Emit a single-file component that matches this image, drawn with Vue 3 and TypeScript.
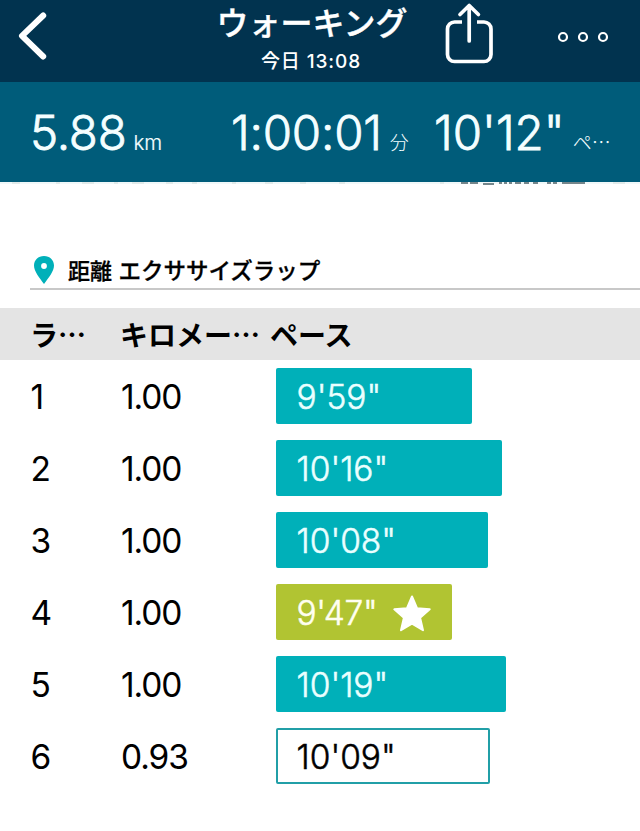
<script setup lang="ts">
interface Lap {
  id: number
  km: string
  pace: string
  width: number
  kind: 'full' | 'best' | 'partial'
}

const laps: Lap[] = [
  { id: 1, km: '1.00', pace: '9\'59"', width: 196, kind: 'full' },
  { id: 2, km: '1.00', pace: '10\'16"', width: 226, kind: 'full' },
  { id: 3, km: '1.00', pace: '10\'08"', width: 212, kind: 'full' },
  { id: 4, km: '1.00', pace: '9\'47"', width: 176, kind: 'best' },
  { id: 5, km: '1.00', pace: '10\'19"', width: 230, kind: 'full' },
  { id: 6, km: '0.93', pace: '10\'09"', width: 214, kind: 'partial' },
]
</script>

<template>
  <main class="screen">
    <header class="topbar">
      <svg class="back" viewBox="0 0 60 82" aria-hidden="true">
        <path d="M43.2 15.500 22 35.800l21.200 20.700" />
      </svg>
      <div class="heading">
        <h1>ウォーキング</h1>
        <p>今日 13:08</p>
      </div>
      <svg class="share" viewBox="0 0 60 82" aria-hidden="true">
        <path d="M22 22h-7.500a7 7 0 0 0-7 7v25.500a7 7 0 0 0 7 7h29.500a7 7 0 0 0 7-7V29a7 7 0 0 0-7-7H37" />
        <path d="M29.200 41V6M20 14.500l9.200-9 9.200 9" stroke-linecap="round" />
      </svg>
      <svg class="more" viewBox="0 0 60 82" aria-hidden="true">
        <circle cx="8" cy="37" r="4" />
        <circle cx="28" cy="37" r="4" />
        <circle cx="48" cy="37" r="4" />
      </svg>
    </header>

    <section class="summary">
      <div class="stat distance"><span class="value">5.88</span><span class="unit">km</span></div>
      <div class="stat duration"><span class="value">1:00:01</span><span class="unit jp">分</span></div>
      <div class="stat pace"><span class="value">10'12"</span><span class="unit jp">ペ…</span></div>
    </section>
    <svg class="map-edge" viewBox="0 0 640 3" aria-hidden="true">
      <path class="faint" d="M0 1h640" />
      <path class="road" d="M12 1h8M56 1h4M82 1h12M114 1h4M132 1h12M166 1h7M192 1h5M232 1h4M265 1h8M300 1h6M339 1h6M440 1h4M613 1h12" />
      <path class="label" d="M461 1h7M470 1h8M483 2h11M499 1h3M504 1h3M509 1h3M515 1h6M524 1h5M533 1h5M547 1h4M553 1h4M562 1h23" />
    </svg>

    <section class="laps">
      <h2 class="title">
        <svg class="pin" viewBox="0 0 20 28" aria-hidden="true">
          <path fill-rule="evenodd" d="M10 0C4.200 0 0 4.200 0 9.600 0 15.500 5.500 22 10 28c4.500-6 10-12.500 10-18.400C20 4.200 15.800 0 10 0Zm0 7.100a2.900 2.900 0 1 1 0 5.800 2.900 2.900 0 0 1 0-5.800Z" />
        </svg>
        <span class="subject">距離</span>
        <span class="name">エクササイズラップ</span>
      </h2>
      <div class="columns head">
        <span>ラ…</span><span>キロメー…</span><span class="pace-head">ペース</span>
      </div>
      <div v-for="lap in laps" :key="lap.id" class="columns row">
        <span>{{ lap.id }}</span>
        <span class="km">{{ lap.km }}</span>
        <div class="bar" :class="lap.kind" :style="{ width: lap.width + 'px' }">
          <span>{{ lap.pace }}</span>
          <svg v-if="lap.kind === 'best'" class="star" viewBox="0 0 38 37" aria-hidden="true">
            <path d="m19 1.500 5 11.700 12.700 1.100-9.600 8.400 2.900 12.500L19 28.600 8 35.200l2.900-12.500-9.600-8.400L14 13.200Z" />
          </svg>
        </div>
      </div>
    </section>
  </main>
</template>

<style>
body {
  background: #fff;
}
</style>

<style scoped>
.screen {
  width: 640px;
  height: 831px;
  overflow: hidden;
  background: #fff;
  color: #000;
  font-family: Inter, "Noto Sans CJK JP", sans-serif;
}
h1, h2, p {
  margin: 0;
}
.topbar {
  display: grid;
  grid-template-columns: 202px 220px 18px 60px 55px 60px;
  height: 82px;
  background: #01334f;
  color: #fff;
}
.topbar svg {
  width: 60px;
  height: 82px;
  fill: none;
  stroke: #fff;
}
.back {
  stroke-width: 6;
  stroke-linecap: round;
  stroke-linejoin: round;
}
.share {
  grid-column: 4;
  stroke-width: 3.7;
  stroke-linejoin: round;
}
.more {
  grid-column: 6;
  stroke-width: 2.2;
}
.heading {
  text-align: center;
  white-space: nowrap;
}
.heading h1 {
  height: 46px;
  font-size: 32px;
  font-weight: 500;
  line-height: 48px;
  -webkit-text-stroke: 0.4px currentColor;
}
.heading p {
  margin-left: -2px;
  font-size: 19px;
  font-weight: 500;
  line-height: 31px;
  letter-spacing: 0.9px;
}
.summary {
  display: grid;
  grid-template-columns: 200px 202px 1fr;
  height: 100px;
  padding-left: 31px;
  box-sizing: border-box;
  background: #005c7a;
  color: #f4feff;
}
.stat {
  display: flex;
  align-items: baseline;
  gap: 8px;
  font-size: 47.5px;
  line-height: 102px;
  font-weight: 300;
  white-space: nowrap;
}
.value {
  letter-spacing: -0.2px;
  -webkit-text-stroke: 0.8px currentColor;
}
.distance {
  gap: 7px;
  margin-left: -1px;
}
.pace .value {
  margin-left: 1px;
  letter-spacing: 0;
}
.unit {
  font-size: 20.5px;
  -webkit-text-stroke: 0.2px currentColor;
}
.unit.jp {
  font-family: "Noto Sans CJK JP", sans-serif;
  font-size: 19px;
  -webkit-text-stroke: 0;
}
.map-edge {
  display: block;
  width: 640px;
  height: 3px;
  fill: none;
}
.faint {
  stroke: #f0f8f9;
  stroke-width: 2;
}
.road {
  stroke: #dce5e4;
  stroke-width: 1.5;
}
.label {
  stroke: #75868b;
  stroke-width: 2;
}
.laps {
  padding-top: 69px;
}
.title {
  display: flex;
  align-items: center;
  height: 36px;
  margin: 0 0 18px 30px;
  padding: 0 0 3px 4px;
  box-sizing: border-box;
  border-bottom: 2px solid #c8c8c8;
  font-family: "Noto Sans CJK JP", sans-serif;
  font-size: 22px;
  font-weight: 500;
  line-height: 31px;
  white-space: nowrap;
  -webkit-text-stroke: 0.3px currentColor;
}
.pin {
  width: 20px;
  height: 28px;
  margin-right: 14px;
  fill: #00b0b9;
}
.subject {
  margin-right: 6.5px;
}
.name {
  font-size: 22.5px;
}
.columns {
  display: grid;
  grid-template-columns: 90px 155px 1fr;
  align-items: center;
  padding-left: 31px;
  white-space: nowrap;
}
.head {
  height: 52px;
  background: #e4e4e4;
  font-family: "Noto Sans CJK JP", sans-serif;
  font-size: 28px;
  font-weight: 700;
}
.head span {
  margin-left: -1px;
}
.head .pace-head {
  margin-left: -6px;
}
.row {
  height: 72px;
  font-size: 33.5px;
  line-height: 42px;
}
.row > span {
  margin-left: -0.5px;
  padding-top: 1px;
}
.row > .km {
  margin-left: 0;
  letter-spacing: -1.1px;
}
.bar {
  display: flex;
  align-items: center;
  height: 56px;
  padding: 1px 0 0 20.5px;
  box-sizing: border-box;
  border-radius: 2px;
  background: #00b0b9;
  color: #eaffff;
  font-weight: 300;
}
.bar span {
  -webkit-text-stroke: 0.5px currentColor;
}
.bar.best {
  background: #b1c432;
  color: #fffff0;
}
.bar.partial {
  padding-left: 18.5px;
  border: 2px solid #219fa7;
  background: #fff;
  color: #000;
}
.bar.best span {
  letter-spacing: -0.3px;
}
.star {
  width: 38px;
  height: 37px;
  margin: 2px 0 0 16px;
  fill: #fff;
  stroke: #fff;
  stroke-width: 2;
  stroke-linejoin: round;
}
</style>
